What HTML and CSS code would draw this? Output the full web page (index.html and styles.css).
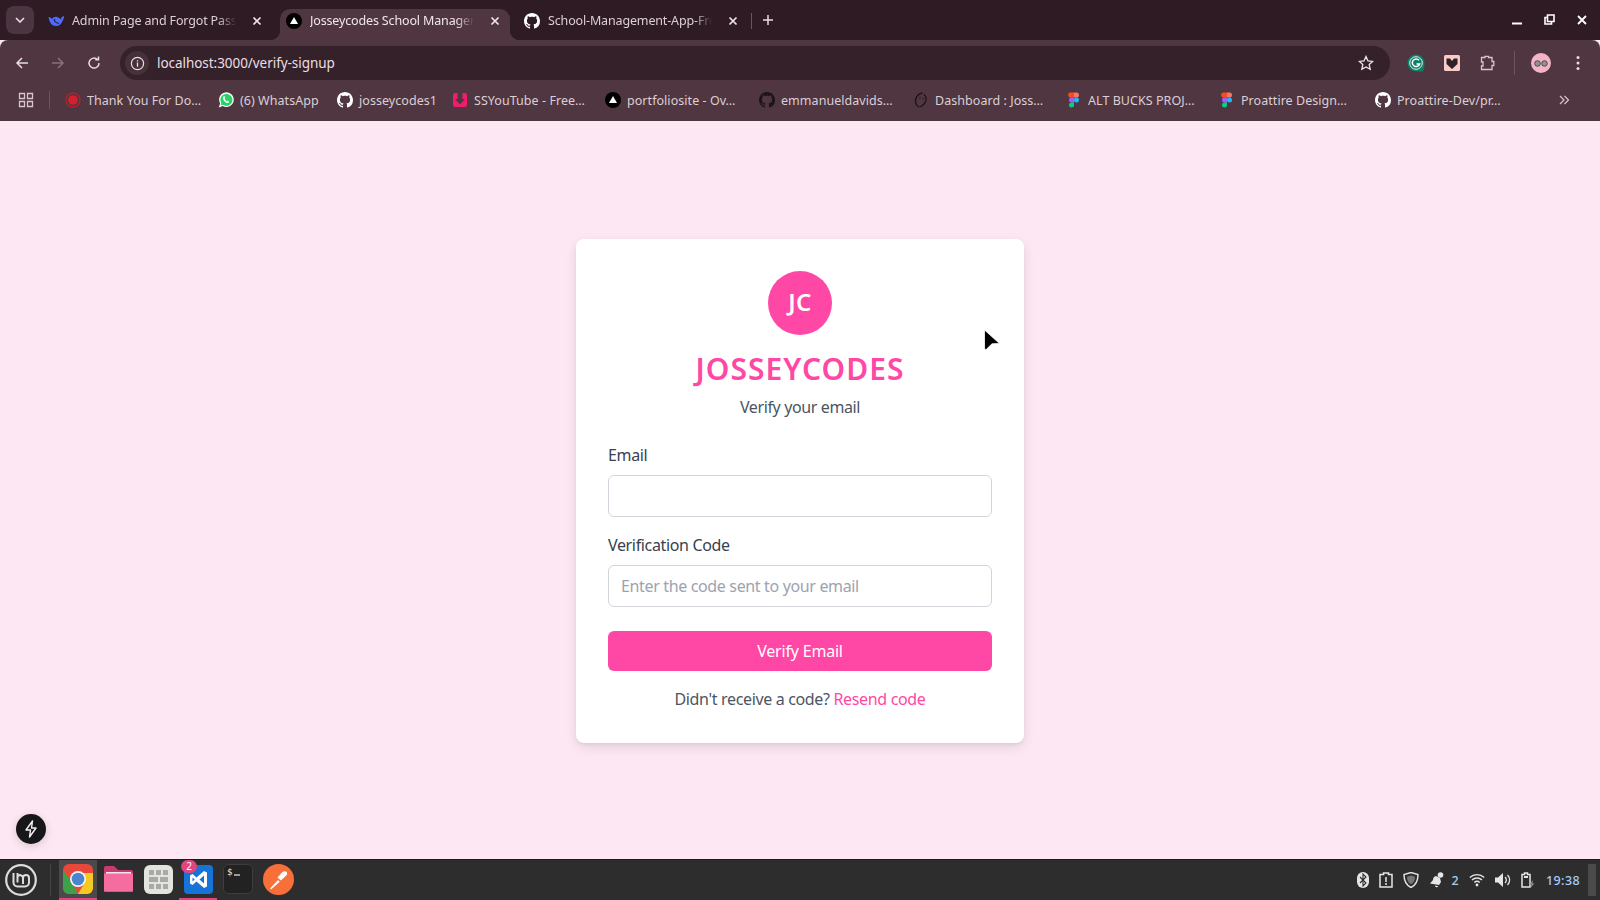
FILE: index.html
```html
<!DOCTYPE html>
<html lang="en">
<head>
  <meta charset="UTF-8">
  <title>Josseycodes School Management</title>
  <link rel="stylesheet" href="styles.css">
</head>
<body>
  <svg class="defs" width="0" height="0">
    <symbol id="github" viewBox="0 0 16 16">
      <path d="M8 0C3.58 0 0 3.58 0 8c0 3.54 2.29 6.53 5.47 7.59.4.07.55-.17.55-.38 0-.19-.01-.82-.01-1.49-2.01.37-2.53-.49-2.69-.94-.09-.23-.48-.94-.82-1.13-.28-.15-.68-.52-.01-.53.63-.01 1.08.58 1.23.82.72 1.21 1.87.87 2.33.66.07-.52.28-.87.51-1.07-1.78-.2-3.64-.89-3.64-3.95 0-.87.31-1.59.82-2.15-.08-.2-.36-1.02.08-2.12 0 0 .67-.21 2.2.82.64-.18 1.32-.27 2-.27s1.36.09 2 .27c1.53-1.04 2.2-.82 2.2-.82.44 1.1.16 1.92.08 2.12.51.56.82 1.27.82 2.15 0 3.07-1.87 3.75-3.65 3.95.29.25.54.73.54 1.48 0 1.07-.01 1.93-.01 2.2 0 .21.15.46.55.38A8.01 8.01 0 0 0 16 8c0-4.42-3.58-8-8-8z"/>
    </symbol>
    <symbol id="vercel" viewBox="0 0 16 16">
      <circle cx="8" cy="8" r="8" fill="#000"/>
      <path d="M8 4l4 7H4z" fill="#fff"/>
    </symbol>
    <symbol id="figma" viewBox="0 0 16 16">
      <path d="M4 .5h4v5H5.500a2.500 2.500 0 0 1-1.500-5z" fill="#f24e1e"/>
      <path d="M8 .5h2.500a2.500 2.500 0 0 1 0 5H8z" fill="#ff7262"/>
      <path d="M8 5.500H5.500a2.500 2.500 0 0 0 0 5H8z" fill="#a259ff"/>
      <circle cx="10.500" cy="8" r="2.500" fill="#1abcfe"/>
      <path d="M5.500 10.500H8V13a2.500 2.500 0 1 1-2.500-2.500z" fill="#0acf83"/>
    </symbol>
    <symbol id="close" viewBox="0 0 10 10">
      <path d="M1.500 1.500l7 7M8.500 1.500l-7 7" stroke="#efe6ea" stroke-width="1.700"/>
    </symbol>
    <clipPath id="chrome-tile">
      <rect x="0" y="0" width="30" height="30" rx="6"/>
    </clipPath>
  </svg>

  <div class="window">
    <header class="tabstrip">
      <button class="tab-search">
        <svg width="10" height="6" viewBox="0 0 10 6"><path d="M1 1l4 4 4-4" fill="none" stroke="#e8dde2" stroke-width="1.600"/></svg>
      </button>
      <div class="tab">
        <svg class="favicon" viewBox="0 0 16 16">
          <path d="M.5 4c1 0 2 .5 3.500 2 1-1.500 3-2.500 5-2 2 .5 3 1.500 3.500 2.500.5-1 1-1.500 1.200-2.500L16 3c0 2-.5 3.500-1.500 5-1 3-3.500 5-6.500 5-4 0-6.500-3-7.500-9z" fill="#4d6bfe"/>
          <path d="M6 7.500c1.500 2 3 3 5 3" fill="none" stroke="#2f1b24" stroke-width="1.200"/>
          <circle cx="6.500" cy="6.800" r=".8" fill="#2f1b24"/>
        </svg>
        <span class="tab-title">Admin Page and Forgot Pass</span>
        <svg class="tab-close"><use href="#close"/></svg>
      </div>
      <div class="tab tab-active">
        <svg class="favicon"><use href="#vercel"/></svg>
        <span class="tab-title">Josseycodes School Manager</span>
        <svg class="tab-close"><use href="#close"/></svg>
      </div>
      <div class="tab">
        <svg class="favicon github"><use href="#github"/></svg>
        <span class="tab-title">School-Management-App-Fro</span>
        <svg class="tab-close"><use href="#close"/></svg>
      </div>
      <span class="tab-sep"></span>
      <span class="new-tab">
        <svg width="12" height="12" viewBox="0 0 12 12"><path d="M6 1v10M1 6h10" stroke="#e8dde2" stroke-width="1.500"/></svg>
      </span>
      <div class="window-controls">
        <svg width="10" height="10" viewBox="0 0 10 10"><path d="M0 8.500h10" stroke="#fff" stroke-width="2"/></svg>
        <svg width="11" height="11" viewBox="0 0 11 11"><path d="M3.500 1h6.500v6.500H3.500zM3.500 3.500H1V10h6.500V7.500" fill="none" stroke="#fff" stroke-width="1.600"/></svg>
        <svg width="10" height="10" viewBox="0 0 10 10"><path d="M1 1l8 8M9 1l-8 8" stroke="#fff" stroke-width="1.800"/></svg>
      </div>
    </header>

    <div class="chrome-bars">
      <nav class="toolbar">
        <svg class="nav-icon" viewBox="0 0 16 16"><path d="M14 8H3M8 3L3 8l5 5" fill="none" stroke="#e8dde2" stroke-width="1.500"/></svg>
        <svg class="nav-icon" viewBox="0 0 16 16"><path d="M2 8h11M8 3l5 5-5 5" fill="none" stroke="#87727b" stroke-width="1.500"/></svg>
        <svg class="nav-icon" viewBox="0 0 16 16"><path d="M13 8a5 5 0 1 1-1.500-3.500M12.500 1.500v3.300H9.200" fill="none" stroke="#e8dde2" stroke-width="1.500"/></svg>
        <div class="omnibox">
          <span class="site-info">
            <svg width="15" height="15" viewBox="0 0 16 16"><circle cx="8" cy="8" r="6.500" fill="none" stroke="#e8dde2" stroke-width="1.300"/><path d="M8 7v4.500M8 4.400v1.500" stroke="#e8dde2" stroke-width="1.400"/></svg>
          </span>
          <span class="url">localhost:3000/verify-signup</span>
          <svg class="star" width="16" height="16" viewBox="0 0 16 16"><path d="M8 1.500l2 4.400 4.700.5-3.500 3.200 1 4.700L8 11.900l-4.200 2.400 1-4.700L1.300 6.400 6 5.900z" fill="none" stroke="#efe6ea" stroke-width="1.300"/></svg>
        </div>
        <div class="toolbar-actions">
          <svg width="18" height="18" viewBox="0 0 18 18"><path d="M9 .5a8.500 8.500 0 0 1 8.500 8.500c0 3-.5 6-1.500 8.500H9A8.500 8.500 0 0 1 9 .5z" fill="#0f7f68"/><circle cx="9" cy="9" r="6.300" fill="none" stroke="#e4f3ee" stroke-width="1"/><path d="M12 6.300A3.800 3.800 0 1 0 12.700 10H9.500" fill="none" stroke="#fff" stroke-width="1.500"/></svg>
          <svg width="16" height="16" viewBox="0 0 16 16"><rect width="16" height="16" rx="1.500" fill="#fbc9c9"/><path d="M2.500 3.500L6 3.500 8 6l2-2.500h3.500V9L8 14 2.500 9z" fill="#2b2226"/></svg>
          <svg width="16" height="16" viewBox="0 0 16 16"><path d="M2.500 2.500H6V1.300h3.500v1.200h3.500v4h1.800v4H13v4H2.500v-3.500H4V7H2.500z" fill="none" stroke="#d8c6cd" stroke-width="1.300"/></svg>
          <span class="toolbar-sep"></span>
          <svg width="20" height="20" viewBox="0 0 20 20"><circle cx="10" cy="10" r="10" fill="#f3b4c8"/><circle cx="6.500" cy="10.500" r="2.800" fill="#8f9593" stroke="#3a3537" stroke-width=".8"/><circle cx="13.500" cy="10.500" r="2.800" fill="#8f9593" stroke="#3a3537" stroke-width=".8"/></svg>
          <svg class="menu-dots" width="4" height="16" viewBox="0 0 4 16"><circle cx="2" cy="2.500" r="1.500" fill="#e8dde2"/><circle cx="2" cy="8" r="1.500" fill="#e8dde2"/><circle cx="2" cy="13.500" r="1.500" fill="#e8dde2"/></svg>
        </div>
      </nav>

      <nav class="bookmarks">
        <svg class="apps" width="16" height="16" viewBox="0 0 16 16"><path d="M1.500 1.500h5v5h-5zM9.500 1.500h5v5h-5zM1.500 9.500h5v5h-5zM9.500 9.500h5v5h-5z" fill="none" stroke="#d8c6cd" stroke-width="1.300"/></svg>
        <span class="bookmark-sep"></span>
        <div class="bookmark-list">
          <a class="bookmark">
            <svg class="favicon" viewBox="0 0 16 16"><circle cx="8" cy="8" r="7" fill="none" stroke="#b81f30" stroke-width="1.300"/><circle cx="8" cy="8" r="4.800" fill="#d4202f"/></svg>
            <span>Thank You For Do…</span>
          </a>
          <a class="bookmark">
            <svg class="favicon" viewBox="0 0 16 16"><path d="M.8 15.500l1.300-4.200A7.300 7.300 0 1 1 4.800 14z" fill="#fff"/><path d="M2.500 13.500l.8-2.500A6 6 0 1 1 5 12.800z" fill="#25d366"/><path d="M5.500 4.500c-1 1-.8 2.700.7 4.500s3.300 2.500 4.400 1.700l.6-1.200-1.900-1-.8.8C7.800 8.300 7 7.500 6.600 6.700l.7-.8-.8-1.800z" fill="#fff"/></svg>
            <span>(6) WhatsApp</span>
          </a>
          <a class="bookmark">
            <svg class="favicon github"><use href="#github"/></svg>
            <span>josseycodes1</span>
          </a>
          <a class="bookmark">
            <svg class="favicon" viewBox="0 0 16 16"><rect x="1" y="1" width="14" height="14" rx="2" fill="#f01e6a"/><path d="M5.500 1h5v6H13l-5 5.500L3 7h2.500z" fill="#4f3640"/></svg>
            <span>SSYouTube - Free…</span>
          </a>
          <a class="bookmark">
            <svg class="favicon"><use href="#vercel"/></svg>
            <span>portfoliosite - Ov…</span>
          </a>
          <a class="bookmark">
            <svg class="favicon github-dark"><use href="#github"/></svg>
            <span>emmanueldavids…</span>
          </a>
          <a class="bookmark">
            <svg class="favicon" viewBox="0 0 16 16"><path d="M9.500 1C5 1.500 2 5.500 2.500 10c.3 2 1.500 4 3.500 5M11 2.500c2.500 2 3 6 .5 9-1.500 2-3.500 3-5 3.500" fill="none" stroke="#1b1418" stroke-width="1.300"/><path d="M7 5v1.500M10 6v1.500" stroke="#1b1418"/></svg>
            <span>Dashboard : Joss…</span>
          </a>
          <a class="bookmark">
            <svg class="favicon"><use href="#figma"/></svg>
            <span>ALT BUCKS PROJ…</span>
          </a>
          <a class="bookmark">
            <svg class="favicon"><use href="#figma"/></svg>
            <span>Proattire Design…</span>
          </a>
          <a class="bookmark">
            <svg class="favicon github"><use href="#github"/></svg>
            <span>Proattire-Dev/pr…</span>
          </a>
        </div>
        <svg class="more" width="12" height="12" viewBox="0 0 12 12"><path d="M2 2l4 4-4 4M6.500 2l4 4-4 4" fill="none" stroke="#d8c6cd" stroke-width="1.200"/></svg>
      </nav>
    </div>

    <main class="page">
      <form class="card">
        <div class="avatar">JC</div>
        <h1 class="brand">JOSSEYCODES</h1>
        <p class="subtitle">Verify your email</p>
        <label class="field-label" for="email">Email</label>
        <input class="field" id="email" type="email">
        <label class="field-label field-label-next" for="code">Verification Code</label>
        <input class="field" id="code" type="text" placeholder="Enter the code sent to your email">
        <button class="submit" type="button">Verify Email</button>
        <p class="resend">Didn't receive a code? <a class="resend-link">Resend code</a></p>
      </form>

      <button class="dev-badge" type="button">
        <svg width="16" height="18" viewBox="0 0 16 18"><path d="M9.500 1L3 10h4.500l-1 7L13 8H8.500z" fill="none" stroke="#f2f2f2" stroke-width="1.400" stroke-linejoin="round"/></svg>
      </button>
      <svg class="cursor" width="18" height="22" viewBox="0 0 18 22"><path d="M1.500 1l15 13.500-7.500.3-5.800 5.700-1.700-.5z" fill="#000" stroke="#fff" stroke-width=".8" stroke-linejoin="round"/></svg>
    </main>

    <footer class="taskbar">
      <div class="start">
        <svg width="32" height="32" viewBox="0 0 32 32"><circle cx="16" cy="16" r="14.800" fill="none" stroke="#dcdcdc" stroke-width="2.200"/><path d="M8.500 9v9.500a4 4 0 0 0 4 4h7.500a4 4 0 0 0 4-4V14a3 3 0 0 0-6 0v6M12.500 9v9.500M18 14a3 3 0 0 0-5.500-1.500" fill="none" stroke="#dcdcdc" stroke-width="2"/></svg>
      </div>
      <span class="taskbar-sep"></span>
      <div class="launcher">
        <div class="launcher-item launcher-active launcher-open">
          <svg width="30" height="30" viewBox="0 0 30 30">
            <g clip-path="url(#chrome-tile)">
              <rect width="30" height="30" fill="#e8483c"/>
              <path d="M0 6l10 14 5 10H0z" fill="#3ea04a"/>
              <path d="M15 9h15v21H15l6-10z" fill="#f6c822"/>
            </g>
            <circle cx="15" cy="15" r="8" fill="#f2f2f2"/>
            <circle cx="15" cy="15" r="6.300" fill="#4a86cf"/>
          </svg>
        </div>
        <div class="launcher-item">
          <svg width="29" height="26" viewBox="0 0 29 26"><path d="M0 2a2 2 0 0 1 2-2h8l4 4h13a2 2 0 0 1 2 2v20H0z" fill="#c93a72"/><path d="M2 6h25v3H2z" fill="#f3e6ec"/><path d="M0 7.500h29V24a1.500 1.500 0 0 1-1.500 1.500h-26A1.500 1.500 0 0 1 0 24z" fill="#f56c9f"/></svg>
        </div>
        <div class="launcher-item">
          <svg width="29" height="29" viewBox="0 0 29 29"><rect width="29" height="29" rx="6" fill="#e4e4df"/><path d="M5 5h5v5H5zM12 5h5v5h-5zM19 5h5v5h-5zM5 12h9v5H5zM16 12h8v5h-8zM5 19h5v5H5zM12 19h5v5h-5zM19 19h5v5h-5z" fill="#a9a9a5"/></svg>
        </div>
        <div class="launcher-item launcher-open vscode">
          <svg width="29" height="29" viewBox="0 0 29 29"><rect width="29" height="29" rx="4" fill="#1673d8"/><path d="M20 6l3 1.500v14L20 23l-7.500-6.500L8.500 20l-2.500-1.500v-8L8.500 9l4 3.500zM20 10.500l-4.500 4 4.500 4zM8.500 12.500v4l2.200-2z" fill="#fff" fill-rule="evenodd"/></svg>
          <span class="launcher-badge">2</span>
        </div>
        <div class="launcher-item">
          <svg width="30" height="30" viewBox="0 0 30 30"><rect x=".5" y=".5" width="29" height="29" rx="5" fill="#222" stroke="#3e3e3e"/><text class="term-text" x="4" y="11">$</text><path d="M11 11h6" stroke="#eee" stroke-width="1.200"/></svg>
        </div>
        <div class="launcher-item">
          <svg width="31" height="31" viewBox="0 0 31 31"><circle cx="15.500" cy="15.500" r="15.500" fill="#f96f3a"/><path d="M7 24.500l8-8.500 1.800 1.800-8.500 7.500zM14.500 13.500l5-5.500c1-1 3-1.200 4-.2s.8 2.800-.2 3.800l-5.500 5z" fill="#fff"/></svg>
        </div>
      </div>
      <div class="tray">
        <svg class="tray-bt" width="12" height="16" viewBox="0 0 12 16"><rect width="12" height="16" rx="6" fill="#e6e6e6"/><path d="M3 5l6 6-3 3V2l3 3-6 6" fill="none" stroke="#2d2d2d" stroke-width="1.100"/></svg>
        <svg class="tray-clip" width="14" height="16" viewBox="0 0 14 16"><path d="M1 2.500h3.500V1h5v1.500H13V15H1z" fill="none" stroke="#e6e6e6" stroke-width="1.500"/><path d="M7 5v5M7 11v2" stroke="#e6e6e6" stroke-width="1.500"/></svg>
        <svg class="tray-shield" width="16" height="16" viewBox="0 0 16 16"><path d="M8 .5l7 2c0 6-2 10.500-7 13-5-2.500-7-7-7-13z" fill="none" stroke="#e0e0e0" stroke-width="1.500"/><path d="M8 3.500l4 1.200c0 3.500-1.200 6-4 7.500-2.800-1.500-4-4-4-7.500z" fill="#777"/></svg>
        <span class="tray-notif">
          <svg width="16" height="16" viewBox="0 0 16 16"><path d="M7 4c-2 .5-3 2-3 4l-3 3.500 9 1.500 2-3-1-4zM6 13.500a1.800 1.800 0 0 0 3.400.8z" fill="#e6e6e6"/><circle cx="11.500" cy="3" r="2.800" fill="#e6e6e6"/></svg>
          <span class="tray-count">2</span>
        </span>
        <svg class="tray-wifi" width="16" height="14" viewBox="0 0 16 14"><path d="M.8 4.500a10.500 10.500 0 0 1 14.400 0M3 7a7.300 7.300 0 0 1 10 0M5.300 9.500a4 4 0 0 1 5.400 0" fill="none" stroke="#e6e6e6" stroke-width="1.400"/><circle cx="8" cy="12" r="1.400" fill="#e6e6e6"/></svg>
        <svg class="tray-vol" width="16" height="14" viewBox="0 0 16 14"><path d="M0 4.500h3L8 0v14l-5-4.500H0z" fill="#e6e6e6"/><path d="M10 4a4 4 0 0 1 0 6M12.500 2a7 7 0 0 1 0 10" fill="none" stroke="#e6e6e6" stroke-width="1.300"/></svg>
        <svg class="tray-batt" width="15" height="17" viewBox="0 0 15 17"><path d="M1 2.500h2.500V1h3v1.500H9V15H1z" fill="none" stroke="#e6e6e6" stroke-width="1.500"/><path d="M3 4h4v2H3z" fill="#e6e6e6"/><path d="M12 8l-3.500 4.500h2L9.500 16l4-4.500h-2z" fill="#8a8a8a"/></svg>
        <span class="clock">19:38</span>
        <span class="show-desktop"></span>
      </div>
    </footer>
  </div>
</body>
</html>
```

FILE: styles.css
```css
* {
  box-sizing: border-box;
}

body {
  margin: 0;
  font-family: "Noto Sans", sans-serif;
  background: #fce7f3;
}

.defs {
  position: absolute;
}

.window {
  height: 100vh;
  display: flex;
  flex-direction: column;
  overflow: hidden;
}

/* tabs */
.tabstrip {
  height: 40px;
  flex: none;
  display: flex;
  align-items: flex-start;
  padding: 6px 0 0 6px;
  background: #2f1b24;
}

.tab-search {
  width: 28px;
  height: 28px;
  border: 0;
  border-radius: 8px;
  padding: 0;
  margin-right: 4px;
  display: flex;
  align-items: center;
  justify-content: center;
  background: #4b3540;
}

.tab {
  width: 230px;
  height: 31px;
  margin: 3px 4px 0;
  padding: 0 10px 8px 6px;
  display: flex;
  align-items: center;
  gap: 8px;
  border-radius: 10px 10px 0 0;
  color: #dccfd5;
  font-size: 12.500px;
  letter-spacing: -0.150px;
  position: relative;
}

.tab-active {
  background: #4f3640;
  color: #f0e6ea;
}

.tab-active::before,
.tab-active::after {
  content: "";
  position: absolute;
  bottom: 0;
  width: 10px;
  height: 10px;
}

.tab-active::before {
  left: -10px;
  background: radial-gradient(circle at 0 0, transparent 10px, #4f3640 10.500px);
}

.tab-active::after {
  right: -10px;
  background: radial-gradient(circle at 100% 0, transparent 10px, #4f3640 10.500px);
}

.favicon {
  width: 16px;
  height: 16px;
  flex: none;
}

.github {
  fill: #fff;
}

.github-dark {
  fill: #1e1418;
}

.tab-title {
  flex: 1;
  min-width: 0;
  white-space: nowrap;
  -webkit-mask-image: linear-gradient(to right, #000 88%, transparent 99%);
  mask-image: linear-gradient(to right, #000 88%, transparent 99%);
}

.tab-close {
  width: 10px;
  height: 10px;
  flex: none;
  margin-left: 6px;
}

.tab-sep {
  width: 1px;
  height: 16px;
  margin: 7px 10px 0 -1px;
  background: #6a5560;
}

.new-tab {
  margin-top: 8px;
  display: flex;
}

.window-controls {
  margin-left: auto;
  margin-top: 8px;
  padding-right: 13px;
  display: flex;
  align-items: center;
  gap: 22px;
}

/* toolbar + bookmarks */
.chrome-bars {
  flex: none;
  height: 81px;
  background: #4f3640;
  border-radius: 8px 8px 0 0;
  display: flex;
  flex-direction: column;
}

.toolbar {
  height: 42px;
  flex: none;
  display: flex;
  align-items: center;
  padding: 4px 20px 0 14px;
}

.nav-icon {
  width: 16px;
  height: 16px;
  margin-right: 20px;
}

.nav-icon:nth-child(3) {
  margin-right: 18px;
}

.omnibox {
  width: 1270px;
  height: 34px;
  flex: none;
  display: flex;
  align-items: center;
  padding: 0 16px 0 5px;
  border-radius: 17px;
  background: #35212a;
}

.site-info {
  width: 24px;
  height: 24px;
  margin-right: 8px;
  border-radius: 50%;
  display: flex;
  align-items: center;
  justify-content: center;
  background: #46303a;
}

.url {
  color: #e8dfe3;
  font-size: 13.500px;
  letter-spacing: -0.050px;
}

.star {
  margin-left: auto;
}

.toolbar-actions {
  flex: 1;
  display: flex;
  align-items: center;
  gap: 19px;
  padding-left: 17px;
}

.toolbar-sep {
  width: 1px;
  height: 24px;
  margin-right: -3px;
  background: #6a5560;
}

.menu-dots {
  margin-left: 6px;
}

.bookmarks {
  flex: 1;
  display: flex;
  align-items: center;
  padding: 0 0 3px 18px;
  position: relative;
}

.bookmark-sep {
  width: 1px;
  height: 18px;
  margin: 0 15px 0 15px;
  background: #6a5560;
}

.bookmark-list {
  display: grid;
  grid-template-columns: 153px 119px 115px 153px 154px 154px 153px 153px 156px 140px;
  align-items: center;
}

.bookmark {
  display: flex;
  align-items: center;
  gap: 6px;
  color: #dccfd5;
  font-size: 12.500px;
  letter-spacing: 0.050px;
  white-space: nowrap;
}

.more {
  margin-left: auto;
  margin-right: 30px;
}

/* page */
.page {
  flex: 1;
  display: flex;
  align-items: center;
  justify-content: center;
  padding-top: 2px;
  position: relative;
  background: #fce7f3;
}

.card {
  width: 448px;
  padding: 32px;
  display: flex;
  flex-direction: column;
  border-radius: 8px;
  background: #fff;
  box-shadow: 0 4px 12px rgba(0, 0, 0, 0.1), 0 2px 4px -2px rgba(0, 0, 0, 0.1);
}

.avatar {
  width: 64px;
  height: 64px;
  align-self: center;
  padding-bottom: 3px;
  display: flex;
  align-items: center;
  justify-content: center;
  border-radius: 50%;
  background: #ff47a6;
  color: #fff;
  font-size: 24px;
  font-weight: 600;
  letter-spacing: 0.500px;
}

.brand {
  margin: 16px 0 0;
  color: #ff47a6;
  font-size: 30px;
  line-height: 36px;
  font-weight: 600;
  letter-spacing: 1.050px;
  text-align: center;
}

.subtitle {
  margin: 8px 0 24px;
  color: #4b5563;
  font-size: 16px;
  line-height: 24px;
  letter-spacing: -0.380px;
  text-align: center;
}

.field-label {
  color: #374151;
  font-size: 16px;
  line-height: 24px;
  letter-spacing: -0.350px;
  margin-bottom: 8px;
}

.field-label-next {
  margin-top: 16px;
}

.field {
  height: 42px;
  padding: 0 12px;
  border: 1px solid #d1d5db;
  border-radius: 6px;
  background: #fff;
  font: inherit;
  font-size: 16px;
  letter-spacing: -0.350px;
}

.field::placeholder {
  color: #9ca3af;
  opacity: 1;
}

.submit {
  height: 40px;
  margin-top: 24px;
  border: 0;
  border-radius: 6px;
  background: #ff47a6;
  color: #fff;
  font: inherit;
  font-size: 16px;
  letter-spacing: -0.200px;
}

.resend {
  margin: 16px 0 0;
  color: #4b5563;
  font-size: 16px;
  line-height: 24px;
  letter-spacing: -0.340px;
  text-align: center;
}

.resend-link {
  color: #ff47a6;
}

.dev-badge {
  position: absolute;
  left: 16px;
  bottom: 15px;
  width: 30px;
  height: 30px;
  padding: 0;
  border: 0;
  border-radius: 50%;
  display: flex;
  align-items: center;
  justify-content: center;
  background: #17171a;
  box-shadow: 0 2px 8px rgba(0, 0, 0, 0.15);
}

.cursor {
  position: absolute;
  left: 983px;
  top: 208px;
}

/* desktop panel */
.taskbar {
  height: 41px;
  flex: none;
  display: flex;
  align-items: center;
  background: #2d2d2d;
  border-top: 1px solid #1c1c1c;
}

.start {
  width: 42px;
  display: flex;
  justify-content: center;
}

.taskbar-sep {
  width: 1px;
  height: 32px;
  margin: 0 8px;
  background: #444;
}

.launcher {
  display: flex;
  height: 100%;
  gap: 2px;
}

.launcher-item {
  width: 38px;
  display: flex;
  align-items: center;
  justify-content: center;
  border-bottom: 2px solid transparent;
  position: relative;
}

.launcher-active {
  background: #4a4a4a;
}

.launcher-open {
  border-bottom-color: #e0457f;
}

.launcher-badge {
  position: absolute;
  left: 2px;
  top: 0;
  width: 16px;
  height: 13px;
  border-radius: 7px;
  background: #e0457f;
  color: #fff;
  font-size: 10px;
  line-height: 13px;
  text-align: center;
}

.term-text {
  fill: #eee;
  font-size: 9px;
  font-family: "DejaVu Sans Mono", monospace;
}

.tray {
  margin-left: auto;
  display: flex;
  align-items: center;
  height: 100%;
  padding-right: 4px;
  gap: 10px;
}

.tray-notif {
  display: flex;
  align-items: center;
  gap: 6px;
}

.tray-count,
.clock {
  color: #a6cdf5;
  font-size: 12.500px;
  font-weight: 500;
  letter-spacing: 0.400px;
}

.clock {
  margin-right: -2px;
}

.show-desktop {
  width: 8px;
  height: 32px;
  background: #4a4a4a;
}
```
